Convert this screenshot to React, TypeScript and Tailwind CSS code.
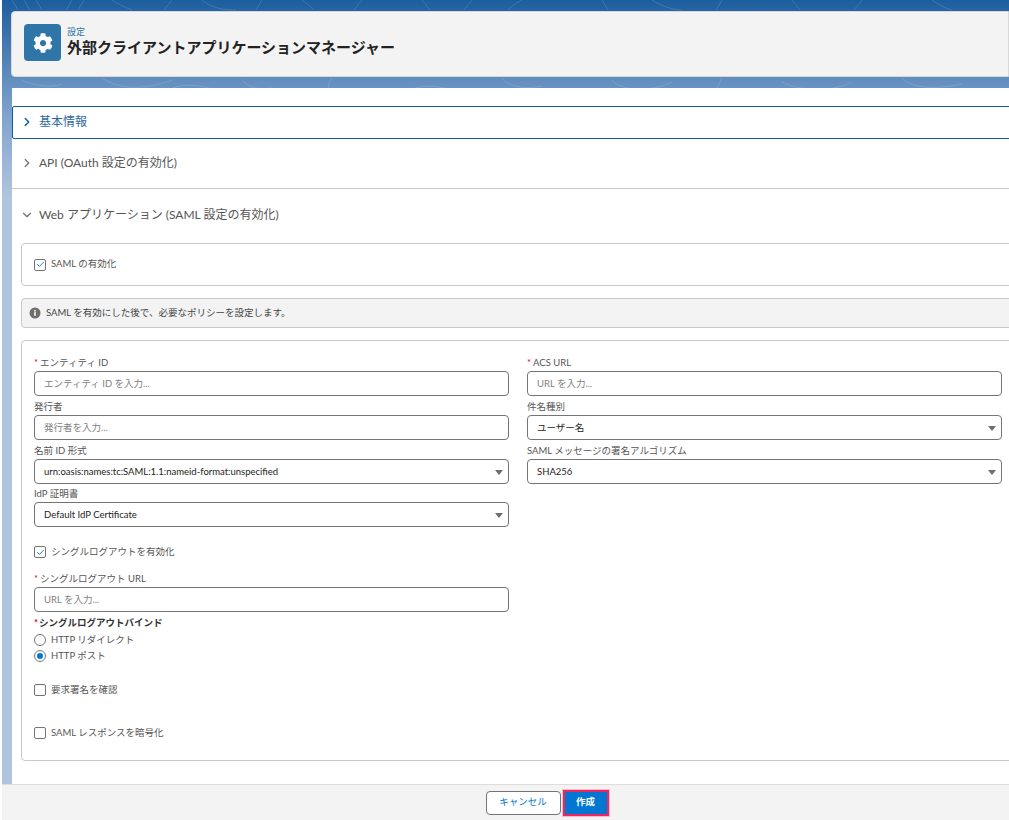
import { ChevronRight, ChevronDown, Check } from 'lucide-react';
import { FaCog } from 'react-icons/fa';

const FONT = "font-['Lato','Noto_Sans_CJK_JP',sans-serif]";

function Field({ label, placeholder, required, className = '' }: { label: string; placeholder: string; required?: boolean; className?: string }) {
  return (
    <div className={className}>
      <div className="h-[18px] text-[9.5px] leading-[19px] text-[#555]">
        {required && <span className="text-[#ea001e] mr-[2px]">*</span>}{label}
      </div>
      <div className="h-[25px] border border-[#747474] rounded-[4px] bg-white px-[9px] pt-[1px] flex items-center text-[9.5px] text-[#808080]">
        {placeholder}
      </div>
    </div>
  );
}

function SelectField({ label, value, className = '' }: { label: string; value: string; className?: string }) {
  return (
    <div className={className}>
      <div className="h-[18px] text-[9.5px] leading-[19px] text-[#555]">{label}</div>
      <div className="h-[25px] border border-[#747474] rounded-[4px] bg-white pl-[9px] pr-[4px] pt-[1px] flex items-center justify-between text-[9.5px] text-[#222]">
        {value}
        <span className="w-0 h-0 mr-[1px] border-x-[4px] border-x-transparent border-t-[5px] border-t-[#706e6b]" />
      </div>
    </div>
  );
}

function Checkbox({ label, checked }: { label: string; checked?: boolean }) {
  return (
    <div className="flex items-center gap-[5px] text-[9.5px] text-[#555]">
      <span className="w-[12px] h-[12px] border border-[#747474] rounded-[2px] bg-white flex items-center justify-center">
        {checked && <Check className="w-[9px] h-[9px] text-[#0176d3]" strokeWidth={2.5} />}
      </span>
      {label}
    </div>
  );
}

function Radio({ label, checked }: { label: string; checked?: boolean }) {
  return (
    <div className="h-[16px] flex items-center gap-[5px] text-[9.5px] text-[#555]">
      <span className="w-[12px] h-[12px] border border-[#747474] rounded-full bg-white flex items-center justify-center">
        {checked && <span className="w-[6px] h-[6px] rounded-full bg-[#0176d3]" />}
      </span>
      {label}
    </div>
  );
}

export default function App() {
  return (
    <div className={`${FONT} w-[1009px] h-[820px] overflow-hidden flex flex-col bg-white`}>
      <div className="relative flex-1 min-h-0 ml-[2px] flex flex-col bg-gradient-to-b from-[#1b5e9f] from-0% via-[#7fa3cc] via-[14%] to-[#b0c4df] to-[24%]">
        {/* faint contour lines of the page backdrop */}
        <svg className="absolute left-0 top-0 w-[1007px] h-[100px]" viewBox="0 0 1007 100" fill="none" stroke="#ffffff" strokeOpacity="0.14" strokeWidth="1">
          <path d="M10 0l6 10M22 0l6 10M34 0l6 10M70 0l-6 10M82 0l-6 10M110 0c6 4 12 7 20 10M170 0l-8 10M200 0c10 8 20 10 34 10M260 0l-6 10M300 0c8 6 10 8 12 10M360 0l-8 10M420 0l8 10M470 0l-8 10M520 0c-8 4-12 8-14 10M600 0l6 10M650 0c10 6 20 10 30 10M720 0l-6 10M790 0l8 10M860 0l-8 10M930 0c6 4 12 8 20 10" />
          <path d="M20 80c10 6 30 8 40 4M100 78c20 14 50 10 70 2M160 96c10-14 40-14 60-2M240 80c8 8 16 10 30 8M330 78c-6 8-4 14 2 20M400 96c10-12 40-14 60 0M500 78c6 8 20 12 40 8M610 80c10 12 40 12 60 2M720 78l-10 20M780 82c20 10 50 10 70 0M900 78c10 10 30 12 60 6" />
        </svg>

        <div className="relative flex-1 min-h-0 pl-[9px] pt-[11px] flex flex-col">
          {/* Page header */}
          <div className="h-[66px] shrink-0 bg-[#f3f3f3] border border-[#d8d8d8] rounded-l-[4px] pl-[12px] pb-[3px] flex items-center gap-[6px]">
            <div className="w-[37px] h-[37px] rounded-[4px] bg-[#2e76a8] flex items-center justify-center">
              <FaCog className="w-[20px] h-[20px] text-white" />
            </div>
            <div className="-mt-[2px]">
              <div className="text-[9px] leading-[10px] text-[#2e76a8]">設定</div>
              <div className="text-[15px] leading-[20px] font-bold text-[#222]">外部クライアントアプリケーションマネージャー</div>
            </div>
          </div>

          {/* Content */}
          <div className="mt-[11px] flex-1 min-h-0 bg-white pt-[18px] ml-[1px] -mr-[16px]">
            <div className="h-[33px] border border-[#0b5cab] rounded-l-[2px] flex items-center pl-[7px] pb-[1px] gap-[5px] text-[12px] text-[#2e6a9e]">
              <ChevronRight className="w-[14px] h-[14px] text-[#0b5cab]" strokeWidth={2.5} />
              基本情報
            </div>
            <div className="h-[50px] border-b border-[#c9c9c9] flex items-center pl-[8px] pb-[2px] gap-[5px] text-[12px] text-[#555]">
              <ChevronRight className="w-[14px] h-[14px] text-[#706e6b]" strokeWidth={2} />
              API (OAuth 設定の有効化)
            </div>
            <div className="h-[54px] flex items-center pl-[8px] pb-[2px] gap-[5px] text-[12px] text-[#555]">
              <ChevronDown className="w-[14px] h-[14px] text-[#706e6b]" strokeWidth={2} />
              Web アプリケーション (SAML 設定の有効化)
            </div>

            <div className="pl-[9px]">
              <div className="h-[43px] border border-[#c9c9c9] rounded-[4px] pl-[12px] flex items-center">
                <Checkbox label="SAML の有効化" checked />
              </div>
              <div className="mt-[12px] h-[30px] border border-[#c9c9c9] rounded-[4px] bg-[#f3f3f3] pl-[7px] flex items-center gap-[5px] text-[9.5px] text-[#444]">
                <svg className="w-[12px] h-[12px]" viewBox="0 0 12 12">
                  <circle cx="6" cy="6" r="5.5" fill="#706e6b" />
                  <rect x="5.2" y="5.2" width="1.6" height="3.6" fill="#ffffff" />
                  <rect x="5.2" y="3" width="1.6" height="1.5" fill="#ffffff" />
                </svg>
                SAML を有効にした後で、必要なポリシーを設定します。
              </div>

              <div className="mt-[12px] h-[421px] border border-[#c9c9c9] rounded-[4px] pl-[12px] pt-[12px]">
                <div className="w-[968px] grid grid-cols-[475px_475px] gap-x-[18px]">
                  <Field className="h-[44px]" label="エンティティ ID" placeholder="エンティティ ID を入力..." required />
                  <Field className="h-[44px]" label="ACS URL" placeholder="URL を入力..." required />
                  <Field className="h-[44px]" label="発行者" placeholder="発行者を入力..." />
                  <SelectField className="h-[44px]" label="件名種別" value="ユーザー名" />
                  <SelectField className="h-[43px]" label="名前 ID 形式" value="urn:oasis:names:tc:SAML:1.1:nameid-format:unspecified" />
                  <SelectField className="h-[43px]" label="SAML メッセージの署名アルゴリズム" value="SHA256" />
                  <SelectField className="h-[44px]" label="IdP 証明書" value="Default IdP Certificate" />
                </div>

                <div className="mt-[17px] w-[475px]">
                  <Checkbox label="シングルログアウトを有効化" checked />
                  <Field className="mt-[10px]" label="シングルログアウト URL" placeholder="URL を入力..." required />
                  <div className="mt-[2px] h-[18px] text-[9.5px] leading-[18px] font-bold text-[#333]">
                    <span className="text-[#ea001e] mr-[1px]">*</span>シングルログアウトバインド
                  </div>
                  <Radio label="HTTP リダイレクト" />
                  <Radio label="HTTP ポスト" checked />
                  <div className="mt-[19px]"><Checkbox label="要求署名を確認" /></div>
                  <div className="mt-[28px]"><Checkbox label="SAML レスポンスを暗号化" /></div>
                </div>
              </div>
            </div>
          </div>
        </div>

        {/* Footer */}
        <div className="relative h-[36px] shrink-0 bg-[#f3f3f3] border-t border-[#dddddd] flex items-center justify-center gap-[2px] pl-[83px]">
          <div className="w-[75px] h-[24px] border border-[#747474] rounded-[4px] bg-white flex items-center justify-center text-[9.5px] text-[#0176d3]">キャンセル</div>
          <div className="w-[46px] h-[26px] bg-[#0176d3] border-[2px] border-[#f0245f] outline outline-1 outline-[#f7b9cc] flex items-center justify-center text-[9.5px] font-bold text-white">作成</div>
        </div>
      </div>
    </div>
  );
}
